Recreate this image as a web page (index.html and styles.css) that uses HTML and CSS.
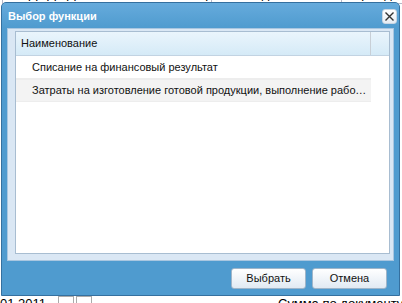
FILE: index.html
```html
<!DOCTYPE html>
<html lang="ru">
<head>
    <meta charset="UTF-8">
    <title>Выбор функции</title>
    <link rel="stylesheet" href="styles.css">
</head>
<body>
    <!-- page behind the dialog -->
    <div class="page">
        <div class="page-top">
            <span class="field">ОУ ДОД «Детско-юношеская спортив</span>
            <span class="label">Отдел:</span>
            <span class="field field-right">Учреждение</span>
        </div>
        <div class="page-bottom">
            <span class="date">01.2011</span>
            <span class="mini-btn"></span>
            <span class="mini-btn"></span>
            <span class="sum">Сумма по документу</span>
        </div>
    </div>

    <div class="window">
        <div class="window-header">
            <span class="window-title">Выбор функции</span>
            <button class="close-btn" aria-label="Закрыть">
                <svg width="11" height="11" viewBox="0 0 11 11">
                    <path d="M1.5 1.5 L9.5 9.5 M9.5 1.5 L1.5 9.5" stroke="#333" stroke-width="1.4"/>
                </svg>
            </button>
        </div>
        <div class="window-body">
            <div class="grid">
                <div class="grid-header">
                    <div class="grid-col">Наименование</div>
                    <div class="grid-col-rest"></div>
                </div>
                <div class="grid-row">
                    <div class="grid-cell">Списание на финансовый результат</div>
                </div>
                <div class="grid-row grid-row-alt">
                    <div class="grid-cell">Затраты на изготовление готовой продукции, выполнение работ, оказание услуг</div>
                </div>
            </div>
        </div>
        <div class="window-footer">
            <button class="btn">Выбрать</button>
            <button class="btn">Отмена</button>
        </div>
    </div>
</body>
</html>
```

FILE: styles.css
```css
body {
    margin: 0;
    width: 402px;
    height: 303px;
    overflow: hidden;
    position: relative;
    background: #fff;
    font-family: "Liberation Sans", Arial, sans-serif;
    font-size: 11px;
    color: #000;
}

/* background page, only its edges show round the dialog */
.page {
    height: 303px;
    overflow: hidden;
    display: flex;
    flex-direction: column;
    justify-content: space-between;
}
.page-top {
    height: 4px;
    overflow: hidden;
    display: flex;
    align-items: flex-end;
    gap: 14px;
    padding-left: 2px;
    font-size: 13px;
}
.page-top .field {
    flex: none;
    border: 1px solid #b5b8c8;
    padding: 2px 4px;
    width: 200px;
    white-space: nowrap;
    overflow: hidden;
}
.page-top .label {
    flex: none;
    padding-bottom: 3px;
    margin-left: 20px;
}
.page-top .field-right {
    width: 60px;
    margin-left: 40px;
}
.page-bottom {
    height: 7px;
    overflow: hidden;
    display: flex;
    align-items: flex-start;
    gap: 2px;
    font-size: 13px;
    line-height: 15px;
}
.page-bottom .date {
    flex: none;
    width: 56px;
}
.page-bottom .mini-btn {
    flex: none;
    width: 14px;
    height: 14px;
    border: 1px solid #aaa;
}
.page-bottom .sum {
    flex: none;
    margin-left: 184px;
}

/* dialog */
.window {
    position: absolute;
    left: 1px;
    top: 2px;
    width: 397px;
    height: 292px;
    border: 1px solid #35709f;
    border-radius: 5px 5px 0 0;
    background: #4f9bcf;
    display: flex;
    flex-direction: column;
}
.window-header {
    height: 25px;
    display: flex;
    align-items: center;
    justify-content: space-between;
    padding: 0 2px 0 6px;
    background: linear-gradient(#66abdc, #4f9bcf);
    border-radius: 4px 4px 0 0;
}
.window-title {
    color: #fff;
    font-weight: bold;
    font-size: 11px;
    margin-top: 1px;
}
.close-btn {
    width: 15px;
    height: 15px;
    padding: 0;
    border: 1px solid #c9d6e3;
    border-radius: 3px;
    background: linear-gradient(#ffffff, #e6edf4);
    display: flex;
    align-items: center;
    justify-content: center;
    margin-top: 2px;
}
.window-body {
    flex: 1;
    margin: 0 5px;
    padding: 2px 3px 6px 7px;
    background: #dae7f4;
    border: 1px solid #a9c6e0;
    display: flex;
}
.grid {
    flex: 1;
    background: #fff;
    border: 1px solid #a8bdd1;
}
.grid-header {
    display: flex;
    height: 23px;
    background: linear-gradient(#eaf5fc, #d5eaf7);
    border-bottom: 1px solid #c2d3e2;
}
.grid-col {
    width: 349px;
    padding-left: 5px;
    line-height: 23px;
    border-right: 1px solid #c8cfd6;
    color: #111;
}
.grid-col-rest {
    flex: 1;
}
.grid-row {
    width: 355px;
    height: 21px;
    border-bottom: 1px solid #ededed;
    border-top: 1px solid #fff;
}
.grid-row-alt {
    background: #f3f3f3;
    border-top-color: #ededed;
}
.grid-cell {
    padding: 0 4px 0 16px;
    line-height: 21px;
    white-space: nowrap;
    overflow: hidden;
    text-overflow: ellipsis;
    color: #111;
}
.window-footer {
    height: 34px;
    display: flex;
    justify-content: flex-end;
    align-items: center;
    gap: 6px;
    padding-right: 12px;
}
.btn {
    width: 75px;
    height: 21px;
    padding: 0;
    border: 1px solid #9fb5c9;
    border-radius: 3px;
    background: linear-gradient(#ffffff, #e1eaf3);
    font-family: "Liberation Sans", Arial, sans-serif;
    font-size: 11px;
    color: #111;
}
```
